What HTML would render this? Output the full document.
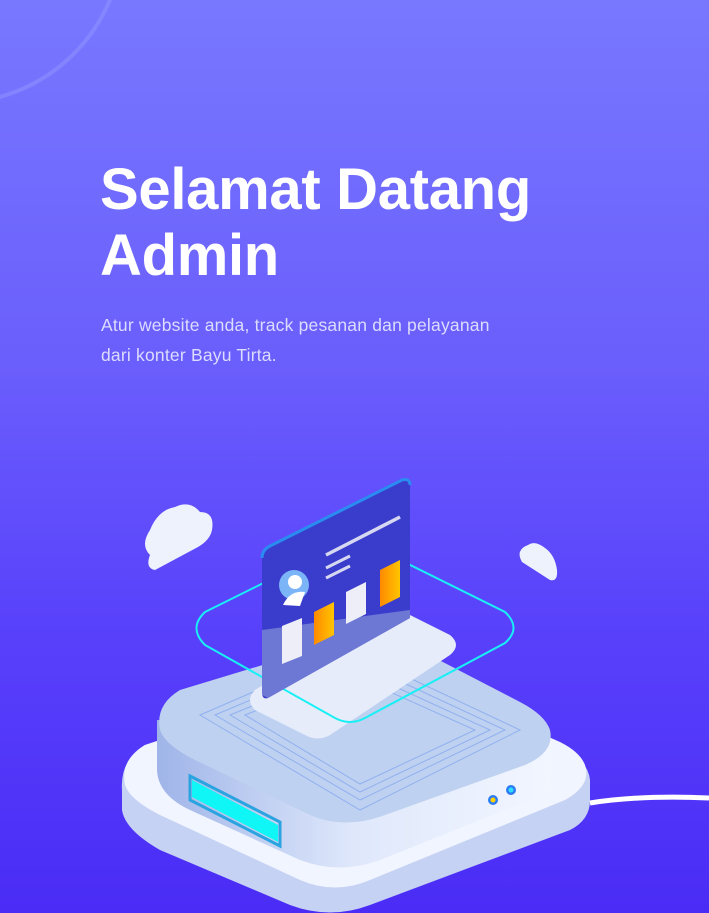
<!DOCTYPE html>
<html><head><meta charset="utf-8"><style>
html,body{margin:0;padding:0}
body{width:709px;height:913px;overflow:hidden;position:relative;background:linear-gradient(180deg,#7878ff 0%,#6a5efc 40%,#5840fb 70%,#4a2cf6 100%);font-family:"Liberation Sans",sans-serif}
h1{position:absolute;left:100px;top:157px;margin:0;color:#fff;font-size:58px;line-height:66px;font-weight:bold;letter-spacing:-0.3px}
p{position:absolute;left:101px;top:310px;margin:0;color:#dcdcff;font-size:17.5px;line-height:30px;letter-spacing:0.2px}
svg{position:absolute;left:0;top:0}
</style></head><body>
<svg width="709" height="913" viewBox="0 0 709 913">
<defs>
<linearGradient id="side" x1="0" x2="1"><stop offset="0" stop-color="#9fb4e8"/><stop offset=".5" stop-color="#dfe8fb"/><stop offset="1" stop-color="#f2f6ff"/></linearGradient>
<linearGradient id="or" x1="0" x2="1"><stop offset="0" stop-color="#ff8a00"/><stop offset="1" stop-color="#ffc400"/></linearGradient>
</defs>
<circle cx="-45" cy="-65" r="168" fill="none" stroke="#8a8cff" stroke-width="4" opacity=".7"/>
<!-- lower slab -->
<path d="M145 745 Q120 760 122 790 L122 810 Q125 830 160 850 L290 905 Q330 920 370 905 L570 830 Q590 820 590 800 L590 780 Q588 760 560 745 L420 680 Q380 665 340 680 Z" fill="#c6d2f4"/>
<path d="M145 745 Q120 760 125 785 Q130 800 160 815 L300 880 Q335 895 370 880 L565 800 Q592 785 585 765 Q580 752 560 742 L420 680 Q380 665 340 680 Z" fill="#f1f5ff"/>
<!-- upper block side -->
<path d="M157 720 L157 770 Q158 795 190 810 L300 860 Q340 875 380 860 L530 800 Q552 790 552 770 L552 740 Z" fill="url(#side)"/>
<!-- upper block top -->
<path d="M180 690 Q155 705 160 730 Q165 745 195 760 L310 815 Q345 830 385 815 L525 765 Q555 752 550 730 Q545 715 520 702 L410 645 Q380 630 345 640 Z" fill="#bfd1f0"/>
<g fill="none" stroke="#8fb0f0" stroke-width="1">
<path d="M200 715 L350 650 L520 730 L360 810 Z"/>
<path d="M215 715 L350 658 L505 730 L360 800 Z"/>
<path d="M230 715 L350 666 L490 730 L360 792 Z"/>
<path d="M245 715 L350 674 L475 730 L360 784 Z"/>
</g>
<!-- cyan slot -->
<path d="M192 780 L278 825 L278 842 L192 797 Z" fill="#10f5f5"/>
<path d="M190 776 L280 822 L280 846 L190 800 Z" fill="none" stroke="#2aa4e0" stroke-width="3"/>
<circle cx="493" cy="800" r="5" fill="#2d7cf5"/><circle cx="493" cy="800" r="2.5" fill="#ffd200"/>
<circle cx="511" cy="790" r="5" fill="#2d7cf5"/><circle cx="511" cy="790" r="2.5" fill="#2de0ff"/>
<!-- cable -->
<path d="M590 803 Q640 795 709 798" stroke="#fff" stroke-width="5" fill="none"/>
<!-- floating plate -->
<path d="M255 690 Q245 700 255 710 L305 735 Q318 742 330 735 L450 655 Q462 645 450 635 L400 610 Q390 605 380 612 Z" fill="#e7ecfb"/>
<!-- cyan ring -->
<path d="M205 612 L340 545 Q355 538 370 545 L505 612 Q522 628 505 643 L365 718 Q350 726 335 718 L205 645 Q188 628 205 612 Z" fill="none" stroke="#19f0f5" stroke-width="2"/>
<!-- screen -->
<path d="M262 558 Q262 550 270 546 L402 480 Q410 478 410 485 L410 618 L268 698 Q262 700 262 692 Z" fill="#3a3ccc"/>
<path d="M262 558 Q262 550 270 546 L402 480 Q410 478 410 485" fill="none" stroke="#2a8cf0" stroke-width="3"/>
<path d="M262 630 L410 610 L410 618 L268 698 L262 695 Z" fill="#8ea0d8" opacity=".6"/>
<path d="M326 555 L400 517" stroke="#d6d8f2" stroke-width="3.5"/>
<path d="M326 568 L350 556 M326 578 L350 566" stroke="#d6d8f2" stroke-width="3"/>
<circle cx="294" cy="585" r="15" fill="#7cb4f8"/>
<circle cx="295" cy="582" r="7" fill="#fff"/>
<path d="M283 605 Q290 590 305 592 L300 606 Z" fill="#fff"/>
<path d="M282 626 L302 618 L302 656 L282 664 Z" fill="#eeeef8"/>
<path d="M314 612 L334 602 L334 635 L314 645 Z" fill="url(#or)"/>
<path d="M346 592 L366 582 L366 614 L346 624 Z" fill="#eeeef8"/>
<path d="M380 570 L400 560 L400 597 L380 607 Z" fill="url(#or)"/>
<!-- clouds -->
<path d="M150 555 Q140 545 150 530 Q158 510 175 507 Q190 500 200 512 Q215 512 212 530 Q210 540 198 547 L155 570 Q145 568 150 555 Z" fill="#eef2fd"/>
<path d="M522 562 Q515 550 528 545 Q535 540 545 548 Q555 555 557 570 Q558 582 550 580 Z" fill="#eef2fd"/>
</svg>
<h1>Selamat Datang<br>Admin</h1>
<p>Atur website anda, track pesanan dan pelayanan<br>dari konter Bayu Tirta.</p>
</body></html>
